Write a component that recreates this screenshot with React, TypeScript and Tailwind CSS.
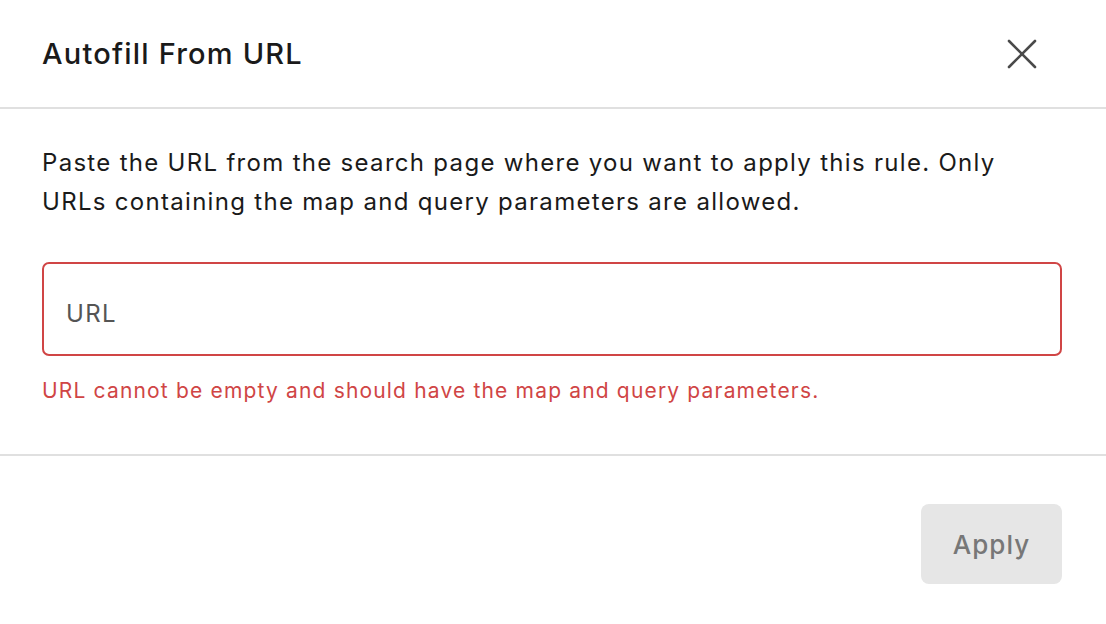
import { X } from "lucide-react";

export default function App() {
  return (
    <div
      className="w-[1106px] h-[624px] bg-white text-[#1a1a1a] overflow-hidden"
      style={{ fontFamily: "Inter, 'Open Sans', sans-serif" }}
    >
      {/* Header */}
      <div className="h-[107px] flex items-center justify-between pl-[42px] pr-[58px]">
        <h2 className="text-[29px] font-medium tracking-[1.2px] leading-none">Autofill From URL</h2>
        <button className="text-[#4a4a4a] -my-4">
          <X size={52} strokeWidth={1.2} />
        </button>
      </div>
      <div className="h-[2px] bg-[#e0e0e0]" />

      {/* Body */}
      <div className="pl-[42px] pr-[44px] pt-[34px] pb-[49px]">
        <p className="text-[24px] leading-[39px] tracking-[1.3px] text-[#1a1a1a] whitespace-nowrap">
          Paste the URL from the search page where you want to apply this rule. Only
          <br />
          URLs containing the map and query parameters are allowed.
        </p>
        <div className="mt-[41px] h-[94px] rounded-[7px] border-2 border-[#d04545] flex items-center pl-[22px] pr-[23px] pt-[9px]">
          <input
            placeholder="URL"
            className="w-full outline-none text-[24px] tracking-[1.3px] placeholder:text-[#555] bg-transparent"
          />
        </div>
        <p className="mt-[21px] text-[21px] leading-[28px] tracking-[1.17px] text-[#d04545]">
          URL cannot be empty and should have the map and query parameters.
        </p>
      </div>
      <div className="h-[2px] bg-[#e0e0e0]" />

      {/* Footer */}
      <div className="flex justify-end pl-[42px] pr-[44px] pt-[48px]">
        <button className="w-[141px] h-[80px] rounded-[8px] bg-[#e6e6e6] text-[26px] font-medium tracking-[1px] text-[#777]">
          Apply
        </button>
      </div>
    </div>
  );
}
